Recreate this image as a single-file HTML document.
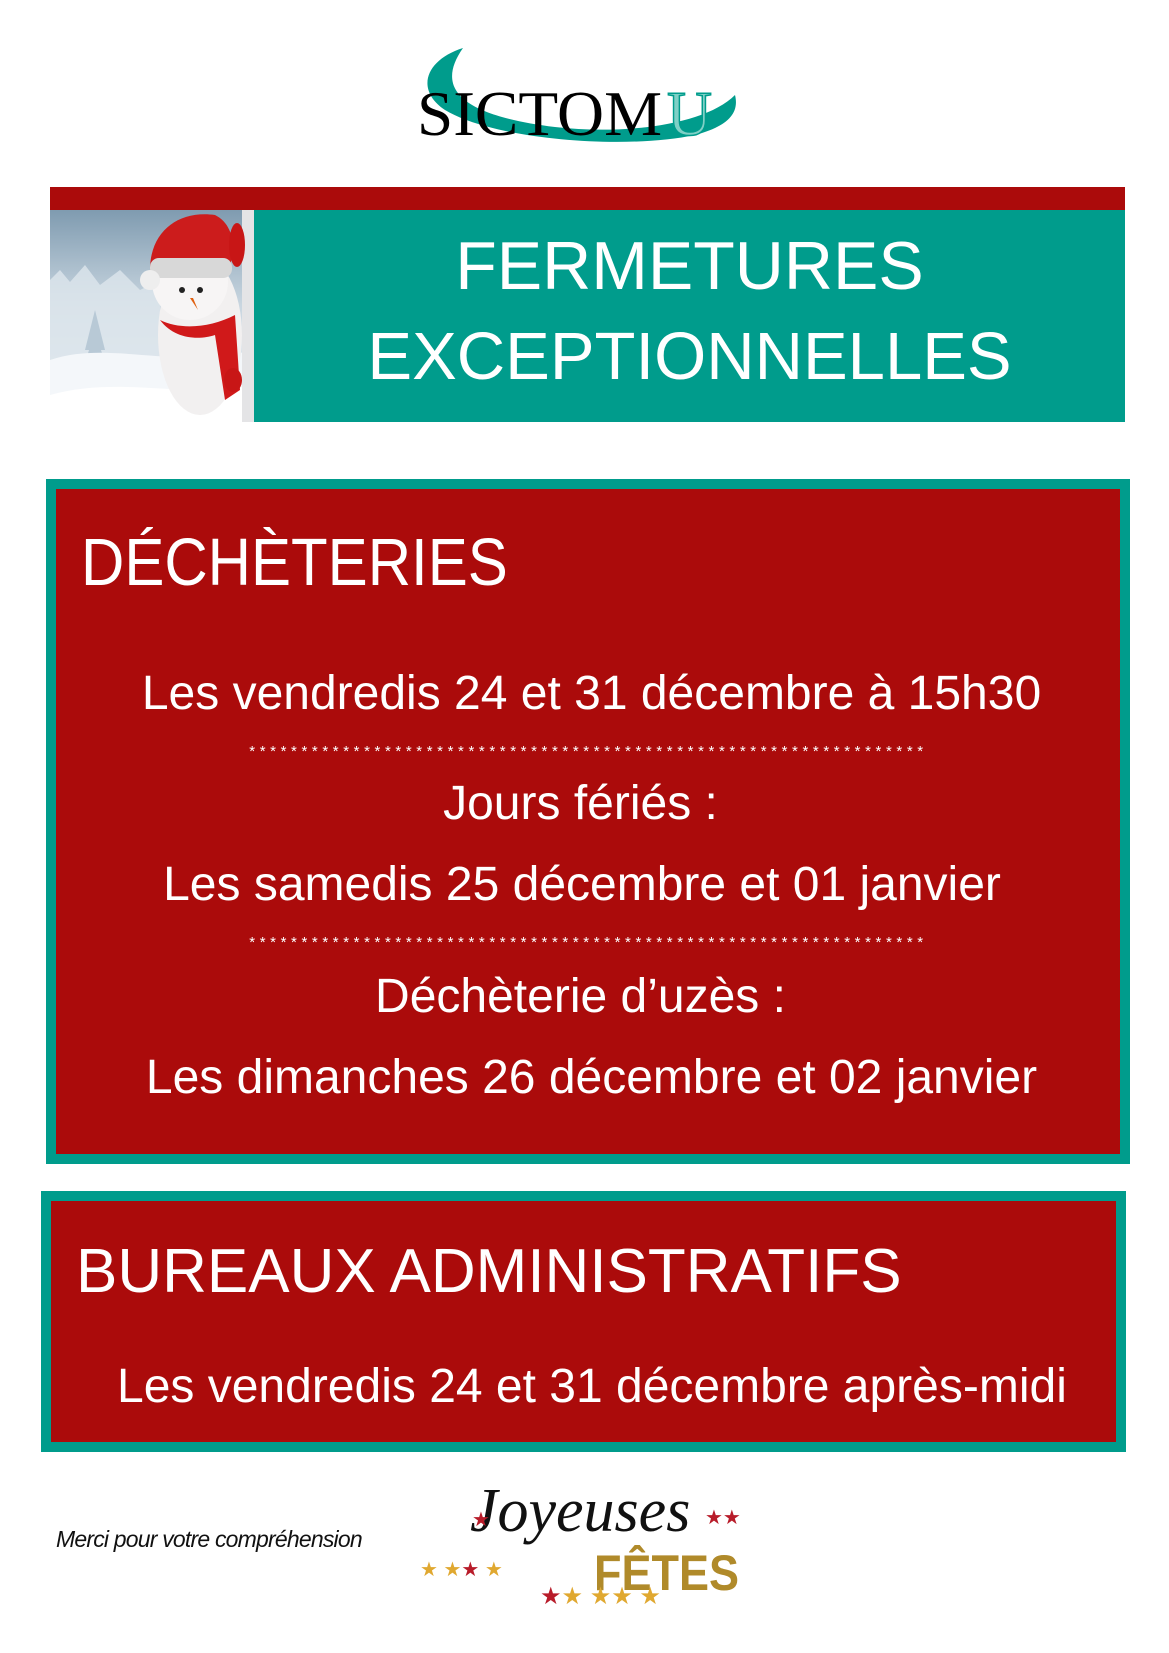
<!DOCTYPE html>
<html><head><meta charset="utf-8"><style>
body{margin:0;width:1169px;height:1653px;background:#fff;position:relative;overflow:hidden;font-family:"Liberation Sans",sans-serif;}
.a{position:absolute;}
.t{position:absolute;color:#fff;white-space:nowrap;}
.c{left:0;right:0;text-align:center;}
.box{position:absolute;background:#ab0b0b;border:10px solid #009c8c;box-sizing:border-box;}
.l{font-size:48px;line-height:1;}
.s{font-size:15px;letter-spacing:4.6px;line-height:1;}
</style></head><body>

<svg class="a" style="left:405px;top:45px" width="360" height="110" viewBox="0 0 360 110">
<path d="M58 3 C20 15 10 45 40 65 C90 95 220 105 290 90 C320 82 335 70 330 50 C300 80 220 90 150 82 C70 72 25 50 58 3 Z" fill="#009c8c"/>
<text x="12" y="90" font-family="Liberation Serif" font-size="64" fill="#000" textLength="245" lengthAdjust="spacingAndGlyphs">SICTOM</text>
<text x="262" y="90" font-family="Liberation Serif" font-size="64" fill="#7fd0c6" stroke="#009c8c" stroke-width="1.5" textLength="45" lengthAdjust="spacingAndGlyphs">U</text>
</svg>

<div class="a" style="left:50px;top:187px;width:1075px;height:23px;background:#ab0b0b"></div>
<div class="a" style="left:50px;top:210px;width:1075px;height:212px;background:#009c8c"></div>
<svg class="a" style="left:50px;top:210px" width="204" height="212" viewBox="0 0 204 212">
<defs><linearGradient id="sk" x1="0" y1="0" x2="0" y2="1"><stop offset="0" stop-color="#7f9bb0"/><stop offset="0.45" stop-color="#c9d6e0"/><stop offset="1" stop-color="#eef2f6"/></linearGradient></defs>
<rect width="204" height="212" fill="url(#sk)"/>
<path d="M0 70 L10 60 L20 72 L35 55 L50 75 L70 60 L90 80 L110 70 L110 212 L0 212Z" fill="#dde6ec" opacity="0.8"/>
<path d="M30 170 L45 120 L60 170Z M35 140 L45 100 L55 140Z" fill="#b8c9d6"/>
<path d="M0 150 C60 130 120 160 204 140 L204 212 L0 212Z" fill="#f4f7fa"/>
<path d="M0 185 C70 165 140 190 204 175 L204 212 L0 212Z" fill="#fff"/>
<rect x="192" y="0" width="12" height="212" fill="#e4e4e6"/>
<ellipse cx="150" cy="125" rx="42" ry="80" fill="#f2f0f0"/>
<circle cx="140" cy="72" r="38" fill="#f7f5f5"/>
<path d="M100 60 C100 20 130 0 165 5 C185 15 185 40 180 55 L100 62Z" fill="#cc1c1c"/>
<rect x="100" y="48" width="82" height="20" rx="9" fill="#d8d8d8"/>
<circle cx="100" cy="70" r="10" fill="#eee"/>
<circle cx="132" cy="80" r="3" fill="#222"/><circle cx="150" cy="80" r="3" fill="#222"/>
<path d="M140 88 L148 100 L143 88Z" fill="#e06010"/>
<path d="M110 110 C130 120 160 118 185 105 L190 180 L175 190 L165 125 C150 130 125 130 110 110Z" fill="#d0191a"/>
<ellipse cx="187" cy="35" rx="8" ry="22" fill="#c81616"/>
<ellipse cx="183" cy="170" rx="9" ry="12" fill="#c81616"/>
</svg>
<div class="t" style="left:254px;right:44px;text-align:center;top:232px;font-size:68px;line-height:1">FERMETURES</div>
<div class="t" style="left:254px;right:44px;text-align:center;top:323px;font-size:67px;line-height:1">EXCEPTIONNELLES</div>

<div class="box" style="left:46px;top:479px;width:1084px;height:685px"></div>
<div class="t" style="left:81px;top:529px;font-size:60px;line-height:1;transform:scaleY(1.12);transform-origin:top left">DÉCHÈTERIES</div>
<div class="t c l" style="top:670px;left:14px">Les vendredis 24 et 31 décembre à 15h30</div>
<div class="t c s" style="top:744px;left:8px">*****************************************************************</div>
<div class="t c l" style="top:780px;left:-8px">Jours fériés :</div>
<div class="t c l" style="top:861px;left:-5px">Les samedis 25 décembre et 01 janvier</div>
<div class="t c s" style="top:935px;left:8px">*****************************************************************</div>
<div class="t c l" style="top:973px;left:-8px">Déchèterie d’uzès :</div>
<div class="t c l" style="top:1054px;left:14px">Les dimanches 26 décembre et 02 janvier</div>

<div class="box" style="left:41px;top:1191px;width:1085px;height:261px"></div>
<div class="t" style="left:76px;top:1241px;font-size:62px;line-height:1">BUREAUX ADMINISTRATIFS</div>
<div class="t l" style="top:1363px;left:117px">Les vendredis 24 et 31 décembre après-midi</div>

<div class="a" style="left:56px;top:1526px;font-size:23px;font-style:italic;color:#111;letter-spacing:-0.8px">Merci pour votre compréhension</div>
<div class="a" style="left:470px;top:1480px;font-family:'Liberation Serif',serif;font-style:italic;font-size:62px;color:#111;line-height:1">Joyeuses</div>
<div class="a" style="left:594px;top:1548px;font-size:50px;font-weight:bold;color:#b08a2a;line-height:1;transform:scaleX(0.9);transform-origin:left">FÊTES</div>
<div class="a" style="left:420px;top:1560px;font-size:20px;color:#e0a830;line-height:1">★ ★<span style="color:#b81c2a">★</span> ★</div>
<div class="a" style="left:540px;top:1585px;font-size:24px;color:#e0a830;line-height:1"><span style="color:#b81c2a">★</span>★ ★★ ★</div>
<div class="a" style="left:472px;top:1510px;font-size:20px;color:#b81c2a;line-height:1">★</div>
<div class="a" style="left:705px;top:1508px;font-size:20px;color:#b81c2a;line-height:1">★★</div>
</body></html>
